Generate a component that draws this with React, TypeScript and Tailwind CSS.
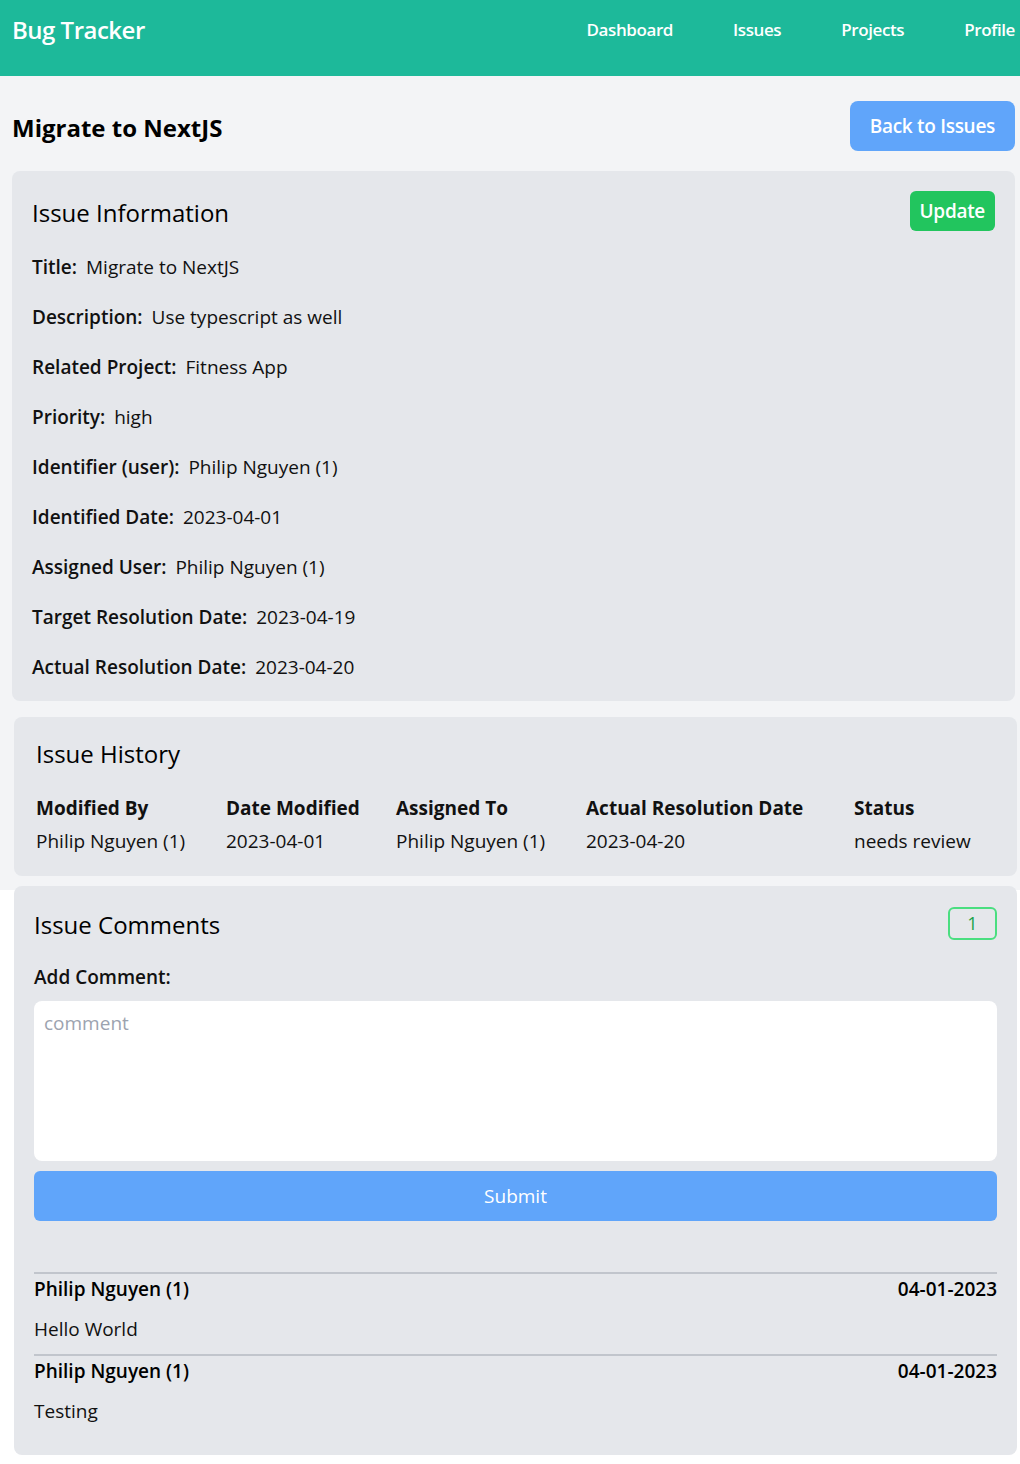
import React, { useState } from 'react';

const font = { fontFamily: '"Open Sans", "Noto Sans", sans-serif' };

const info = [
    { label: 'Title:', value: 'Migrate to NextJS' },
    { label: 'Description:', value: 'Use typescript as well' },
    { label: 'Related Project:', value: 'Fitness App' },
    { label: 'Priority:', value: 'high' },
    { label: 'Identifier (user):', value: 'Philip Nguyen (1)' },
    { label: 'Identified Date:', value: '2023-04-01' },
    { label: 'Assigned User:', value: 'Philip Nguyen (1)' },
    { label: 'Target Resolution Date:', value: '2023-04-19' },
    { label: 'Actual Resolution Date:', value: '2023-04-20' },
];

const comments = [
    { user: 'Philip Nguyen (1)', date: '04-01-2023', text: 'Hello World' },
    { user: 'Philip Nguyen (1)', date: '04-01-2023', text: 'Testing' },
];

const App = () => {
    const [comment, setComment] = useState('');

    return (
        <div className="text-[#111] pb-[10px] bg-[linear-gradient(to_bottom,#f3f4f6_890px,#ffffff_890px)]" style={font}>
            {/* Navbar */}
            <nav className="h-[76px] bg-[#1db99a] flex justify-between items-start pl-3 pr-[5px] pt-[14px]">
                <span className="text-[24px] leading-8 font-semibold text-white tracking-[-0.5px]">Bug Tracker</span>
                <div className="flex gap-[60px] pt-[2px] text-[17px] leading-7 font-semibold text-white tracking-[-0.4px]">
                    <a href="#">Dashboard</a>
                    <a href="#">Issues</a>
                    <a href="#">Projects</a>
                    <a href="#">Profile</a>
                </div>
            </nav>

            <main className="px-3 pr-[5px]">
                <div className="flex justify-between items-center pt-[25px] h-[75px]">
                    <h1 className="mt-1 text-[24px] font-bold text-black">Migrate to NextJS</h1>
                    <button className="h-[50px] px-5 bg-[#60a5fa] text-white text-[19px] font-semibold rounded-lg tracking-[-0.3px]">
                        Back to Issues
                    </button>
                </div>

                {/* Issue Information */}
                <section className="mt-5 bg-[#e5e7eb] rounded-lg p-5">
                    <div className="flex justify-between items-center h-10">
                        <h2 className="mt-1 text-[24px] leading-8 font-medium text-black">Issue Information</h2>
                        <button className="h-10 px-2.5 bg-[#22c55e] text-white text-[19px] font-semibold rounded-md tracking-[-0.3px]">
                            Update
                        </button>
                    </div>
                    <div className="mt-[22px] flex flex-col gap-[22px]">
                        {info.map((row) => (
                            <p key={row.label} className="text-[19px] leading-7">
                                <span className="font-semibold mr-[9px]">{row.label}</span>
                                <span>{row.value}</span>
                            </p>
                        ))}
                    </div>
                </section>

                {/* Issue History */}
                <section className="mt-4 ml-[2px] -mr-[2px] bg-[#e5e7eb] rounded-lg pt-[21px] pb-[18px] pl-[22px] pr-5">
                    <h2 className="text-[24px] leading-8 font-medium text-black">Issue History</h2>
                    <div className="mt-[22px] grid grid-cols-[190px_170px_190px_268px_1fr] text-[19px]">
                        <div className="h-[33px] flex items-center font-bold">Modified By</div>
                        <div className="h-[33px] flex items-center font-bold">Date Modified</div>
                        <div className="h-[33px] flex items-center font-bold">Assigned To</div>
                        <div className="h-[33px] flex items-center font-bold">Actual Resolution Date</div>
                        <div className="h-[33px] flex items-center font-bold">Status</div>
                        <div className="h-[33px] flex items-center">Philip Nguyen (1)</div>
                        <div className="h-[33px] flex items-center">2023-04-01</div>
                        <div className="h-[33px] flex items-center">Philip Nguyen (1)</div>
                        <div className="h-[33px] flex items-center">2023-04-20</div>
                        <div className="h-[33px] flex items-center">needs review</div>
                    </div>
                </section>

                {/* Issue Comments */}
                <section className="mt-[10px] ml-[2px] -mr-[2px] bg-[#e5e7eb] rounded-lg pt-[21px] pb-[19px] px-5">
                    <div className="flex justify-between items-center h-[33px]">
                        <h2 className="mt-[3px] text-[24px] leading-8 font-medium text-black">Issue Comments</h2>
                        <span className="w-[49px] h-[33px] flex items-center justify-center border-2 border-[#4ade80] rounded-md text-[#16a34a] text-[18px]">
                            1
                        </span>
                    </div>
                    <label className="block mt-[23px] text-[19px] leading-7 font-semibold">Add Comment:</label>
                    <textarea
                        value={comment}
                        onChange={(e) => setComment(e.target.value)}
                        placeholder="comment"
                        className="mt-[10px] block w-full h-[160px] bg-white rounded-lg px-[10px] py-2 text-[19px] placeholder:text-[#9ca3af] resize-none outline-none"
                    />
                    <button className="mt-[10px] w-full h-[50px] bg-[#60a5fa] text-white text-[19px] font-medium rounded-md">
                        Submit
                    </button>

                    <div className="mt-[51px]">
                        {comments.map((c, i) => (
                            <div key={i} className="border-t-2 border-[#c1c5cc] pt-[1px] pb-[11px]">
                                <div className="flex justify-between text-[19px] leading-7 font-semibold text-black">
                                    <span>{c.user}</span>
                                    <span>{c.date}</span>
                                </div>
                                <p className="mt-3 text-[19px] leading-7">{c.text}</p>
                            </div>
                        ))}
                    </div>
                </section>
            </main>
        </div>
    );
};

export default App;
